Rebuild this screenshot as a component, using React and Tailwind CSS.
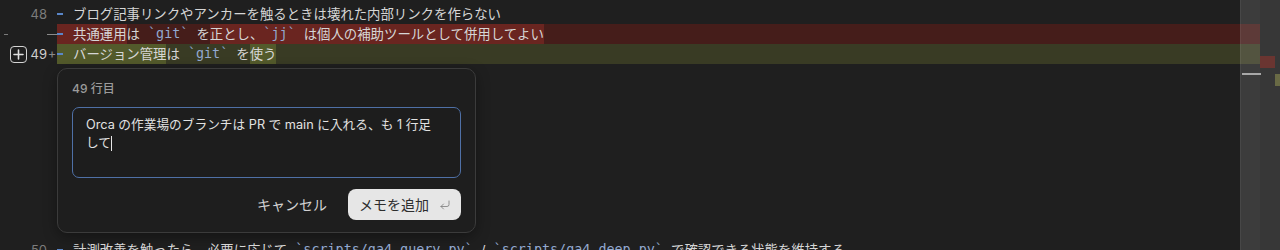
import { CornerDownLeft } from "lucide-react";

const sans = "font-['Inter','Noto_Sans_CJK_JP',sans-serif]";

// inline code inside a diff line
const Code = ({ children }) => (
  <span className="font-['DejaVu_Sans_Mono','Noto_Sans_CJK_JP',monospace] text-[13.4px] text-[#93a9cf]">
    {children}
  </span>
);

const DiffDash = () => <span className="block w-[6px] h-[2px] bg-[#5a86c8]" />;

function Row({ left, num, sign, bg = "", mark = "", numClass = "text-[#7c7c7c]", children }) {
  return (
    <div className="flex h-5 items-center">
      <div className="flex w-[57px] h-full items-center shrink-0">
        <div className="w-[30px] h-full flex items-center">{left}</div>
        <div className={`w-[17px] text-right text-[13px] leading-5 ${numClass}`}>{num}</div>
        <div className="w-[10px] h-full flex items-center justify-center text-[13px] text-[#8a8a8a]">{sign}</div>
      </div>
      <div className={`flex flex-1 h-full items-center ${bg}`}>
        <div className={`w-[16px] h-full flex items-center shrink-0 ${mark}`}>
          <DiffDash />
        </div>
        <div className="text-[13.4px] leading-5 whitespace-nowrap text-[#d6d6d6] h-full flex items-center">
          {children}
        </div>
      </div>
    </div>
  );
}

export default function App() {
  const redHi = "bg-[#6a2520]";
  const greenHi = "bg-[#535a2b]";

  return (
    <div className={`relative w-[1280px] h-[250px] overflow-hidden bg-[#1f1f1f] flex ${sans}`}>
      <div className="w-[1260px] pt-1 flex flex-col">
        <Row num="48">ブログ記事リンクやアンカーを触るときは壊れた内部リンクを作らない</Row>

        <Row
          left={<span className="ml-[4px] block w-[4px] h-[1px] bg-[#7a7a7a]" />}
          sign={<span className="block w-[10px] h-[1px] bg-[#8a8a8a]" />}
          bg="bg-[#451d1a]"
          mark={redHi}
        >
          <span className={`${redHi} h-full flex items-center`}>共通運用</span>
          <span className="h-full flex items-center">
            は <Code>&nbsp;`git`&nbsp;</Code> を
          </span>
          <span className={`${redHi} h-full flex items-center`}>
            正とし、<Code>`jj`&nbsp;</Code> は個人の補助ツールとして併用してよい
          </span>
        </Row>

        <Row
          left={
            <span className="ml-[10px] flex w-[17px] h-[17px] items-center justify-center rounded-[4px] border-[1.5px] border-[#d4d4d4]">
              <svg width="11" height="11" viewBox="0 0 11 11">
                <path d="M5.5 1v9M1 5.5h9" stroke="#e0e0e0" strokeWidth="1.6" strokeLinecap="round" />
              </svg>
            </span>
          }
          num="49"
          numClass="text-[#cfcfcf]"
          sign="+"
          bg="bg-[#393b24]"
          mark={greenHi}
        >
          <span className={`${greenHi} h-full flex items-center`}>バージョン管理</span>
          <span className="h-full flex items-center">
            は <Code>&nbsp;`git`&nbsp;</Code> を
          </span>
          <span className={`${greenHi} h-full flex items-center`}>使う</span>
        </Row>

        {/* comment composer */}
        <div className="ml-[57px] mt-1 mb-[7px] w-[419px] h-[165px] rounded-[10px] border border-[#3b3b3b] bg-[#1e1e1e] px-[14px] pt-[12px] pb-[12px] flex flex-col shadow-[0_4px_14px_rgba(0,0,0,0.35)]">
          <div className="text-[12px] leading-4 text-[#9b9b9b] font-medium">49 行目</div>
          <div className="mt-[10px] h-[72px] rounded-[7px] border border-[#4f70a6] bg-[#1d1d1d] pl-[13px] pr-[10px] pt-[8px] text-[12.7px] leading-[18px] text-[#e2e2e2]">
            <div className="whitespace-nowrap">Orca の作業場のブランチは PR で main に入れる、も 1 行足</div>
            <div className="flex items-center">
              して<span className="inline-block w-[1px] h-[15px] bg-[#e6e6e6]" />
            </div>
          </div>
          <div className="mt-[11px] flex justify-end items-center gap-[8px]">
            <button className="px-[13px] h-[31px] text-[14px] text-[#d2d2d2]">キャンセル</button>
            <button className="flex items-center gap-[10px] h-[31px] pl-[11px] pr-[10px] rounded-[8px] bg-[#e6e6e6] text-[14px] text-[#2e2e2e]">
              メモを追加
              <CornerDownLeft size={12} strokeWidth={1.6} className="text-[#7a7a7a]" />
            </button>
          </div>
        </div>

        <Row num="50" mark="">
          計測改善を触ったら、必要に応じて <Code>&nbsp;`scripts/ga4_query.py`&nbsp;</Code> / <Code>&nbsp;`scripts/ga4_deep.py`&nbsp;</Code> で確認できる状態を維持する
        </Row>
      </div>

      {/* overview ruler */}
      <div className="relative w-[20px] h-full bg-[#373737]">
        <div className="absolute left-0 top-[56px] w-[15px] h-[12px] bg-[#6a3531]" />
        <div className="absolute left-[15px] top-[74px] w-[5px] h-[12px] bg-[#696a45]" />
      </div>

      {/* scrollbar track over the editor */}
      <div className="absolute left-[1240px] top-0 w-[20px] h-full bg-white/[0.13] border-l border-white/[0.06]">
        <div className="mt-[73px] ml-px w-[19px] h-[2px] bg-[#a8a8a8]" />
      </div>
    </div>
  );
}
